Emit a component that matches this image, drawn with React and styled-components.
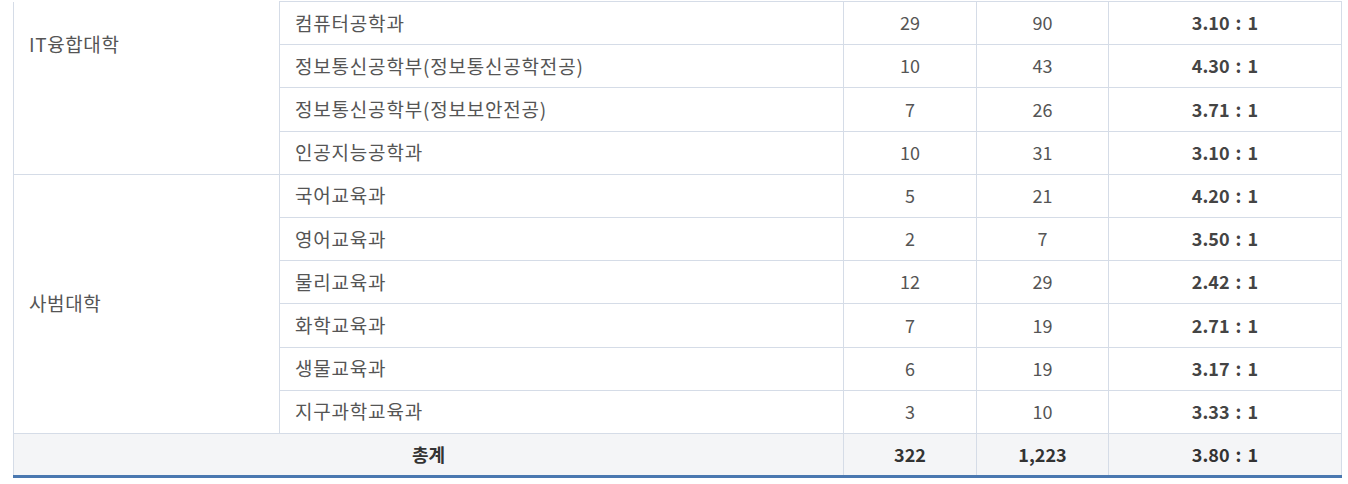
import React from 'react'
import styled, { createGlobalStyle } from 'styled-components';

const GlobalStyle = createGlobalStyle`
    body {
        margin: 0;
        background: #ffffff;
        font-family: 'Noto Sans CJK KR', 'Noto Sans', sans-serif;
    }
`;

const colleges = [
    {
        name: 'IT융합대학',
        offsetTop: true,
        rows: [
            ['컴퓨터공학과', 29, 90, '3.10 : 1'],
            ['정보통신공학부(정보통신공학전공)', 10, 43, '4.30 : 1'],
            ['정보통신공학부(정보보안전공)', 7, 26, '3.71 : 1'],
            ['인공지능공학과', 10, 31, '3.10 : 1'],
        ],
    },
    {
        name: '사범대학',
        rows: [
            ['국어교육과', 5, 21, '4.20 : 1'],
            ['영어교육과', 2, 7, '3.50 : 1'],
            ['물리교육과', 12, 29, '2.42 : 1'],
            ['화학교육과', 7, 19, '2.71 : 1'],
            ['생물교육과', 6, 19, '3.17 : 1'],
            ['지구과학교육과', 3, 10, '3.33 : 1'],
        ],
    },
];

const App = () => {
return (
    <>
        <GlobalStyle />
        <Wrapper>
            <Table>
                <colgroup>
                    <col style={{width: '266px'}} />
                    <col style={{width: '564px'}} />
                    <col style={{width: '133px'}} />
                    <col style={{width: '132px'}} />
                    <col />
                </colgroup>
                <tbody>
                    {colleges.map(college => college.rows.map((row, i) => (
                        <Row key={college.name + row[0]}>
                            {i === 0 && (
                                <CollegeCell rowSpan={college.rows.length} $top={college.offsetTop}>
                                    {college.name}
                                </CollegeCell>
                            )}
                            <DeptCell>{row[0]}</DeptCell>
                            <NumCell>{row[1]}</NumCell>
                            <NumCell>{row[2]}</NumCell>
                            <RatioCell>{row[3]}</RatioCell>
                        </Row>
                    )))}
                    <TotalRow>
                        <TotalCell colSpan={2}>총계</TotalCell>
                        <TotalCell>322</TotalCell>
                        <TotalCell>1,223</TotalCell>
                        <TotalCell>3.80 : 1</TotalCell>
                    </TotalRow>
                </tbody>
            </Table>
        </Wrapper>
    </>
)
}
export default App

const Wrapper = styled.div`
    padding: 1px 6px 0 13px;
`;

const Table = styled.table`
    width: 1329px;
    border-collapse: collapse;
    table-layout: fixed;
    font-size: 18px;
    color: #555555;
    border-bottom: 3px solid #4a78b0;
`;

const Row = styled.tr`
    height: 43.2px;
`;

const Cell = styled.td`
    border: 1px solid #d5dce7;
    padding: 0 15px;
    line-height: 1.2;
`;

const CollegeCell = styled(Cell)`
    font-size: 19px;
    letter-spacing: 0.6px;
    vertical-align: ${props => props.$top ? 'top' : 'middle'};
    padding-top: ${props => props.$top ? '31px' : '0'};
    border-top: ${props => props.$top ? 'none' : '1px solid #d5dce7'};
`;

const DeptCell = styled(Cell)`
    font-size: 19px;
    letter-spacing: 0.8px;
    padding-left: 15px;
`;

const NumCell = styled(Cell)`
    text-align: center;
`;

const RatioCell = styled(Cell)`
    text-align: center;
    font-weight: bold;
    word-spacing: 2px;
    color: #444444;
`;

const TotalRow = styled.tr`
    height: 43px;
    background-color: #f4f5f7;
`;

const TotalCell = styled(Cell)`
    text-align: center;
    font-weight: bold;
    word-spacing: 2px;
    color: #333333;
`;
